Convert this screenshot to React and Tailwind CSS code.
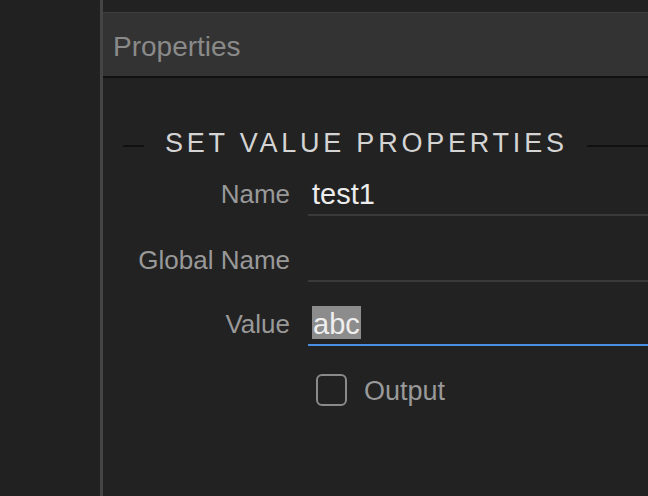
export default function App() {
  const font = { fontFamily: '"Liberation Sans", Arial, sans-serif' }

  return (
    <div
      className="flex h-[496px] w-[648px] overflow-hidden bg-[#222222]"
      style={font}
    >
      <div className="w-[100px] shrink-0 bg-[#212121]" />
      <div className="w-[3px] shrink-0 bg-[#444444]" />

      <div className="flex min-w-0 flex-1 flex-col">
        <div className="h-[12px] bg-[#222222]" />
        <div className="flex h-[66px] items-center border-t border-b-2 border-t-[#3e3e3e] border-b-[#111111] bg-[#333333] pl-[10px] pt-[4px]">
          <span className="text-[28px] leading-none text-[#8a8a8a]">
            Properties
          </span>
        </div>

        <div className="flex flex-col pt-[52px]">
          {/* section title */}
          <div className="flex h-[27px] items-center whitespace-nowrap">
            <div className="ml-[20px] mt-[4px] h-[2px] w-[21px] shrink-0 bg-[#111111]" />
            <span className="ml-[21px] text-[27px] leading-none tracking-[0.14em] text-[#d4d4d4]">
              SET VALUE PROPERTIES
            </span>
            <div className="ml-[19px] mt-[4px] h-[2px] flex-1 bg-[#111111]" />
          </div>

          {/* Name */}
          <div className="mt-[19px] flex h-[40px]">
            <label className="w-[187px] shrink-0 text-right text-[26px] leading-[37px] text-[#999999]">
              Name
            </label>
            <div className="ml-[18px] flex flex-1 items-start border-b-2 border-[#3a3a3a] pl-[4px] pt-[2px]">
              <span className="text-[29px] leading-[33px] text-[#ececec]">
                test1
              </span>
            </div>
          </div>

          {/* Global Name */}
          <div className="mt-[26px] flex h-[40px]">
            <label className="w-[187px] shrink-0 text-right text-[26px] leading-[37px] text-[#999999]">
              Global Name
            </label>
            <div className="ml-[18px] flex-1 border-b-2 border-[#3a3a3a] pl-[4px]" />
          </div>

          {/* Value */}
          <div className="mt-[24px] flex h-[40px]">
            <label className="w-[187px] shrink-0 text-right text-[26px] leading-[37px] text-[#999999]">
              Value
            </label>
            <div className="ml-[18px] flex flex-1 items-start border-b-2 border-[#4a8fe2] pl-[4px]">
              <span className="inline-block h-[33px] bg-[#8c8c8c] px-[1px] pt-[2px] text-[29px] leading-[33px] text-[#efefef]">
                abc
              </span>
            </div>
          </div>

          {/* Output checkbox */}
          <div className="mt-[28px] flex h-[32px] items-center">
            <div className="w-[187px] shrink-0" />
            <div className="ml-[26px] flex items-center">
              <div className="h-[32px] w-[31px] rounded-[6px] border-2 border-[#8a8a8a]" />
              <span className="ml-[17px] pt-[2px] text-[27px] leading-none text-[#999999]">
                Output
              </span>
            </div>
          </div>
        </div>
      </div>
    </div>
  )
}
